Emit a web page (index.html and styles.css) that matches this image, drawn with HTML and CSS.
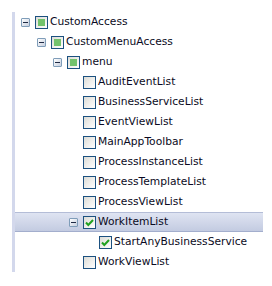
FILE: index.html
```html
<!DOCTYPE html>
<html>
<head>
<meta charset="utf-8">
<link rel="stylesheet" href="styles.css">
</head>
<body>
<div class="tree">
  <div class="row l0"><span class="tog minus"></span><span class="cb partial"></span><span class="lbl">CustomAccess</span></div>
  <div class="row l1"><span class="tog minus"></span><span class="cb partial"></span><span class="lbl">CustomMenuAccess</span></div>
  <div class="row l2"><span class="tog minus"></span><span class="cb partial"></span><span class="lbl">menu</span></div>
  <div class="row l3"><span class="tog"></span><span class="cb"></span><span class="lbl">AuditEventList</span></div>
  <div class="row l3"><span class="tog"></span><span class="cb"></span><span class="lbl">BusinessServiceList</span></div>
  <div class="row l3"><span class="tog"></span><span class="cb"></span><span class="lbl">EventViewList</span></div>
  <div class="row l3"><span class="tog"></span><span class="cb"></span><span class="lbl">MainAppToolbar</span></div>
  <div class="row l3"><span class="tog"></span><span class="cb"></span><span class="lbl">ProcessInstanceList</span></div>
  <div class="row l3"><span class="tog"></span><span class="cb"></span><span class="lbl">ProcessTemplateList</span></div>
  <div class="row l3"><span class="tog"></span><span class="cb"></span><span class="lbl">ProcessViewList</span></div>
  <div class="row l3 selected"><span class="tog minus"></span><span class="cb checked"><svg viewBox="0 0 11 11" width="11" height="11"><path d="M2 5.5 L4.3 8 L9 3" fill="none" stroke="#21a121" stroke-width="2"/></svg></span><span class="lbl">WorkItemList</span></div>
  <div class="row l4"><span class="tog"></span><span class="cb checked"><svg viewBox="0 0 11 11" width="11" height="11"><path d="M2 5.5 L4.3 8 L9 3" fill="none" stroke="#21a121" stroke-width="2"/></svg></span><span class="lbl">StartAnyBusinessService</span></div>
  <div class="row l3"><span class="tog"></span><span class="cb"></span><span class="lbl">WorkViewList</span></div>
</div>
</body>
</html>
```

FILE: styles.css
```css
html, body {
  margin: 0;
  padding: 0;
  background: #fff;
}
.tree {
  margin: 12px 0 0 12px;
  width: 248px;
  border-left: 3px solid #d3d8ec;
  font-family: "DejaVu Sans", Verdana, sans-serif;
  font-size: 10.7px;
  color: #0a0a22;
}
.row {
  height: 20px;
  display: flex;
  align-items: center;
  box-sizing: border-box;
}
.l0 { padding-left: 6px; }
.l1 { padding-left: 22px; }
.l2 { padding-left: 38px; }
.l3 { padding-left: 54px; }
.l4 { padding-left: 70px; }
.selected {
  border-top: 1px solid #b4bdd7;
  border-bottom: 1px solid #a3aecd;
  background: linear-gradient(#dfe4f2, #c3cbe1);
}
.tog {
  width: 9px;
  height: 9px;
  flex: none;
  margin-right: 5px;
  box-sizing: border-box;
  position: relative;
}
.tog.minus {
  border: 1px solid #7f9db9;
  background: linear-gradient(135deg, #ffffff, #c6cede);
  border-radius: 1px;
}
.tog.minus::after {
  content: "";
  position: absolute;
  left: 1px;
  top: 3px;
  width: 5px;
  height: 1px;
  background: #1f2a44;
}
.cb {
  width: 13px;
  height: 13px;
  flex: none;
  box-sizing: border-box;
  border: 1px solid #1c5180;
  background: linear-gradient(135deg, #dcdcd6, #ffffff);
  margin-right: 2px;
  display: flex;
  align-items: center;
  justify-content: center;
}
.cb.partial::after {
  content: "";
  width: 7px;
  height: 7px;
  background: #73c36c;
}
.cb svg { display: block; }
.lbl {
  white-space: nowrap;
  line-height: 12px;
}
```
